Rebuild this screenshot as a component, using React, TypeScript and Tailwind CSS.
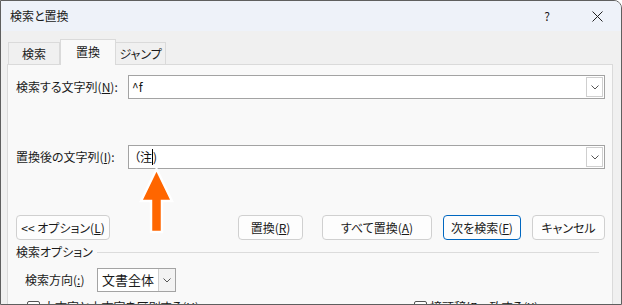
import React from 'react';

const font = "font-['Noto_Sans_CJK_JP','Noto_Sans',sans-serif] [font-feature-settings:'palt']";

function Combo({ children }: { children?: React.ReactNode }) {
  return (
    <div className="flex-1 h-[24px] flex bg-white border border-[#a3a3a3]">
      <div className="flex-1 flex items-center pl-[3px] text-[12px] text-[#111]">{children}</div>
      <div className="w-[17px] m-px ml-0 border border-[#cfcfcf] bg-white flex items-center justify-center">
        <svg width="8" height="5" viewBox="0 0 8 5">
          <path d="M0.5 0.5 L4 4 L7.5 0.5" fill="none" stroke="#555" strokeWidth="1" />
        </svg>
      </div>
    </div>
  );
}

function Btn({ children, w, def, className = '' }: { children: React.ReactNode; w: string; def?: boolean; className?: string }) {
  return (
    <div
      className={`${w} ${className} h-[25px] rounded-[4px] bg-[#fdfdfd] flex items-center justify-center text-[12px] text-[#1a1a1a] border ${
        def ? 'border-[#0067c0]' : 'border-[#d0d0d0]'
      }`}
    >
      {children}
    </div>
  );
}

export default function App() {
  return (
    <div className={`relative w-[622px] h-[305px] overflow-hidden bg-[#f0f0f0] border border-[#5f5f5f] rounded-tr-[8px] flex flex-col ${font}`}>
      {/* title bar */}
      <div className="h-[30px] shrink-0 bg-[#eef2f9] flex items-center pl-[9px] text-[12px] text-[#1a1a1a]">
        <span>検索と置換</span>
        <div className="flex-1" />
        <span className="w-[20px] text-center text-[12px]">?</span>
        <div className="w-[35px]" />
        <svg width="11" height="11" viewBox="0 0 11 11" className="mr-[18px]">
          <path d="M0.5 0.5 L10.5 10.5 M10.5 0.5 L0.5 10.5" stroke="#222" strokeWidth="1" />
        </svg>
      </div>

      <div className="flex-1 pl-[6px] pt-[8px] flex flex-col">
        {/* tabs */}
        <div className="flex items-end h-[25px] pl-[1px] text-[12px] text-[#1a1a1a]">
          <div className="w-[52px] h-[22px] border border-b-0 border-[#dadada] bg-[#f0f0f0] flex items-center justify-center">検索</div>
          <div className="relative z-10 -mb-px w-[56px] h-[26px] border border-b-0 border-[#dadada] bg-[#f9f9f9] flex items-center justify-center pb-[2px]">置換</div>
          <div className="w-[50px] h-[22px] border border-b-0 border-l-0 border-[#dadada] bg-[#f0f0f0] flex items-center justify-center">ジャンプ</div>
        </div>

        {/* panel */}
        <div className="w-[606px] flex-1 bg-[#f9f9f9] border border-[#dadada] pl-[8px] pr-[7px] text-[12px] text-[#1a1a1a]">
          <div className="mt-[10px] flex items-center">
            <span className="w-[112px] shrink-0">検索する文字列(<u>N</u>):</span>
            <Combo>^f</Combo>
          </div>
          <div className="mt-[46px] flex items-center">
            <span className="w-[112px] shrink-0">置換後の文字列(<u>I</u>):</span>
            <Combo>
              <span className="ml-[2px]">（注</span>
              <span className="w-px h-[16px] bg-black" />
              <span>)</span>
            </Combo>
          </div>

          <div className="mt-[46px] flex">
            <Btn w="w-[94px]">&lt;&lt; オプション(<u>L</u>)</Btn>
            <div className="flex-1" />
            <Btn w="w-[65px]">置換(<u>R</u>)</Btn>
            <Btn w="w-[110px]" className="ml-[19px]">すべて置換(<u>A</u>)</Btn>
            <Btn w="w-[78px]" className="ml-[11px]" def>次を検索(<u>F</u>)</Btn>
            <Btn w="w-[73px]" className="ml-[11px]">キャンセル</Btn>
          </div>

          <div className="mt-[4px] h-[16px] flex items-center">
            <span>検索オプション</span>
            <div className="flex-1 h-px bg-[#dcdcdc] ml-[4px] mr-[6px]" />
          </div>

          <div className="mt-[8px] flex items-center pl-[9px]">
            <span className="w-[72px] shrink-0">検索方向(<u>:</u>)</span>
            <div className="w-[79px] h-[24px] flex border border-[#a3a3a3] bg-white">
              <div className="flex-1 flex items-center pl-[4px] text-[13px]">文書全体</div>
              <div className="w-[17px] border-l border-[#cfcfcf] bg-[#f3f3f3] flex items-center justify-center">
                <svg width="8" height="5" viewBox="0 0 8 5">
                  <path d="M0.5 0.5 L4 4 L7.5 0.5" fill="none" stroke="#555" strokeWidth="1" />
                </svg>
              </div>
            </div>
          </div>

          <div className="mt-[6px] flex items-center pl-[11px]">
            <div className="w-[13px] h-[13px] border border-[#555] rounded-[2px] bg-white" />
            <span className="ml-[3px]">大文字と小文字を区別する(<u>H</u>)</span>
            <div className="w-[191px] shrink-0 flex items-center ml-auto">
              <div className="w-[13px] h-[13px] border border-[#555] rounded-[2px] bg-white" />
              <span className="ml-[3px]">接頭辞に一致する(<u>X</u>)</span>
            </div>
          </div>
        </div>
      </div>

      {/* annotation arrow */}
      <svg className="absolute left-[137px] top-[164px]" width="36" height="70" viewBox="0 0 36 70">
        <polygon
          points="18.5,4 34,36 24,36 24,67 13,67 13,36 3,36"
          fill="#ff6600"
          stroke="#ffffff"
          strokeWidth="2.5"
          strokeLinejoin="miter"
        />
      </svg>
    </div>
  );
}
